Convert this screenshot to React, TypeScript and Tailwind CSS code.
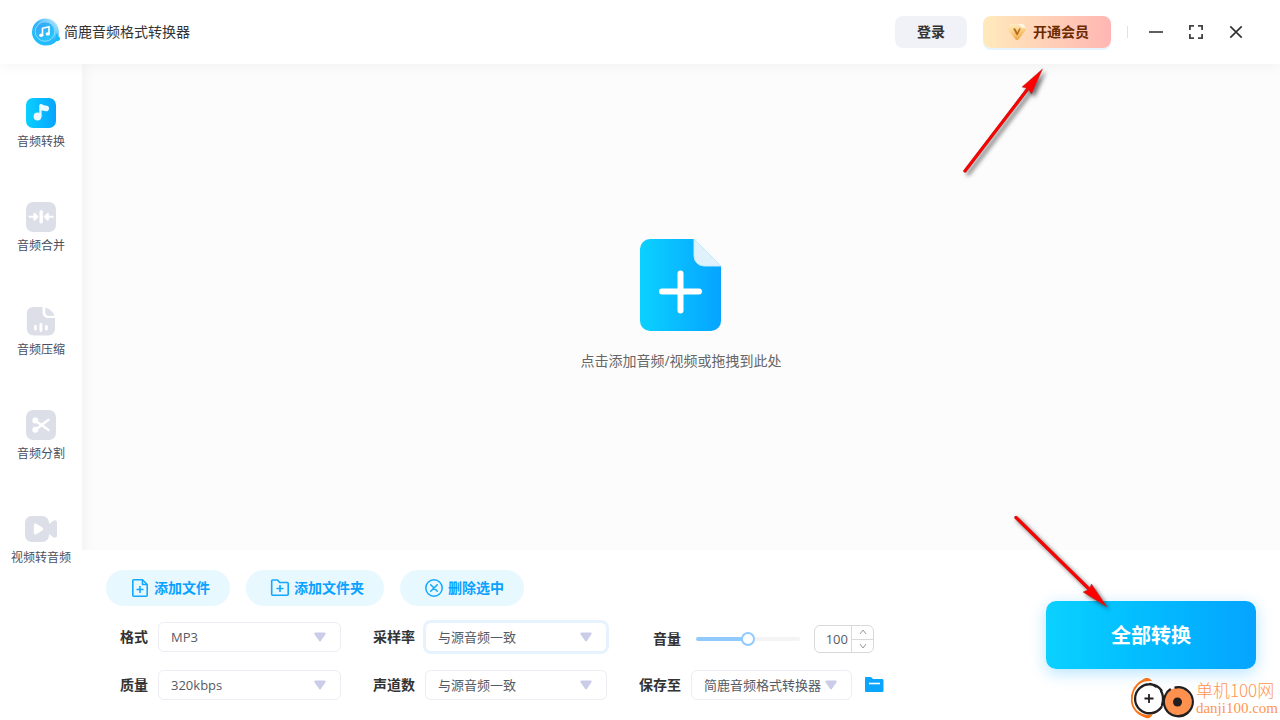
import { useState } from "react";
import type { ReactNode } from "react";
import clsx from "clsx";

const navItems = [
    { label: "音频转换", icon: <ConvertIcon /> },
    { label: "音频合并", icon: <MergeIcon /> },
    { label: "音频压缩", icon: <CompressIcon /> },
    { label: "音频分割", icon: <SplitIcon /> },
    { label: "视频转音频", icon: <VideoIcon /> },
];

/* ---------- icons ---------- */

function LogoIcon() {
    return (
        <svg width="30" height="30" viewBox="0 0 30 30" aria-hidden="true">
            <defs>
                <linearGradient id="logoRing" x1="0" y1="1" x2="1" y2="0">
                    <stop offset="0" stopColor="#12c4fb" />
                    <stop offset="0.5" stopColor="#2fb4fb" />
                    <stop offset="1" stopColor="#d9f3fe" />
                </linearGradient>
                <linearGradient id="logoCore" x1="0" y1="0" x2="1" y2="1">
                    <stop offset="0" stopColor="#3f9ffa" />
                    <stop offset="1" stopColor="#1fd0fb" />
                </linearGradient>
            </defs>
            <circle cx="14.5" cy="15" r="13.5" fill="url(#logoRing)" />
            <path d="M16 28.300c5-1 8.500-4.500 9-10.300.5-2 1.600-2 2-.3.4 1 .3 1.600 1.200 2.300 1.200.9 1.300 2.200.2 3.300-.9.900-2 1-3.200.900-2.200 2.600-5.200 4-9.200 4.100z" fill="#12bdf8" />
            <circle cx="14" cy="14.500" r="9.800" fill="url(#logoCore)" stroke="#8fdcfe" strokeWidth="1" />
            <path d="M11.500 18.500V11.300l6.500-1.500v7" fill="none" stroke="#fff" strokeWidth="1.600" />
            <ellipse cx="10.200" cy="18.300" rx="2.100" ry="1.700" fill="#fff" />
            <ellipse cx="16.800" cy="16.900" rx="2.100" ry="1.700" fill="#fff" />
        </svg>
    );
}

function GemIcon() {
    return (
        <svg width="20" height="20" viewBox="0 0 20 20" aria-hidden="true">
            <defs>
                <linearGradient id="gem" x1="0" y1="0" x2="0.3" y2="1">
                    <stop offset="0" stopColor="#fff0cf" />
                    <stop offset="0.5" stopColor="#fbd48c" />
                    <stop offset="1" stopColor="#f0a94c" />
                </linearGradient>
            </defs>
            <path d="M5 2h10c.8 0 1.400.3 1.900.9l2 3c.5.8.4 1.700-.2 2.400l-7.300 9.200c-.8 1-2 1-2.800 0L1.300 8.300c-.6-.7-.7-1.600-.2-2.400l2-3C3.600 2.300 4.200 2 5 2z" fill="url(#gem)" />
            <path d="M11 2h4c.8 0 1.400.3 1.900.9L19 6.500l-4-1z" fill="#fff7e6" />
            <path d="M6 6.500h2.300l1.900 3.700 2-3.700h1.600L10.700 13h-1.200z" fill="#b86d1e" />
        </svg>
    );
}

function ConvertIcon() {
    return (
        <svg width="32" height="32" viewBox="0 0 32 32" aria-hidden="true">
            <defs>
                <linearGradient id="convert" x1="0" y1="0" x2="1" y2="0">
                    <stop offset="0" stopColor="#0ad0ff" />
                    <stop offset="1" stopColor="#07a4ff" />
                </linearGradient>
            </defs>
            <rect x="1" y="1" width="30" height="30" rx="7" fill="url(#convert)" />
            <circle cx="12.500" cy="19.500" r="3.900" fill="#ecfaff" />
            <path d="M14.300 19.500V8.800c0-1.500 1.200-2.100 2.600-1.500 1.300.6 2.700 1.300 4.800 1.500 1.700.2 2.500 1.300 2.300 2.900-.2 1.900-1.500 2.800-3.400 2.500-1.800-.2-3-.6-4-1v6.500z" fill="#ecfaff" />
        </svg>
    );
}

function MergeIcon() {
    return (
        <svg width="32" height="32" viewBox="0 0 32 32" aria-hidden="true">
            <rect x="1" y="1" width="30" height="30" rx="7" fill="#dcdfe7" />
            <rect x="14.500" y="9" width="3.400" height="13.500" rx="1.700" fill="#fff" />
            <path d="M4.500 14.700h4v-2.200c0-.8.900-1.100 1.500-.6l3 3c.5.500.5 1.100 0 1.600l-3 3c-.6.500-1.500.2-1.500-.6v-2.200h-4c-1.300 0-1.300-2 0-2z" fill="#fff" />
            <path d="M27.800 14.700h-4v-2.200c0-.8-.9-1.100-1.500-.6l-3 3c-.5.500-.5 1.100 0 1.600l3 3c.6.500 1.500.2 1.500-.6v-2.200h4c1.300 0 1.300-2 0-2z" fill="#fff" />
        </svg>
    );
}

function CompressIcon() {
    return (
        <svg width="32" height="32" viewBox="0 0 32 32" aria-hidden="true">
            <path d="M9 2h8.500v5c0 4 2.500 6 6 6H30v10c0 4.500-2.500 7.500-7 7.500H9c-4.500 0-7.200-3-7.200-7.500V9C1.800 4.500 4.500 2 9 2z" fill="#dcdfe7" />
            <path d="M20.300 2.500c3.700 1 7.800 4.500 9.500 8.300h-6.300c-2 0-3.200-1.200-3.200-3.200z" fill="#dcdfe7" />
            <g fill="#fff">
                <rect x="9" y="20" width="2.800" height="5.500" rx="1.400" />
                <rect x="14.500" y="18" width="2.800" height="9" rx="1.400" />
                <rect x="20" y="20" width="2.800" height="5.500" rx="1.400" />
            </g>
        </svg>
    );
}

function SplitIcon() {
    return (
        <svg width="32" height="32" viewBox="0 0 32 32" aria-hidden="true">
            <rect x="1" y="1" width="30" height="30" rx="7" fill="#dcdfe7" />
            <circle cx="10.300" cy="11.500" r="3" fill="#fff" />
            <circle cx="10.300" cy="20.800" r="3" fill="#fff" />
            <path d="M11.500 12.500 23.500 21M11.500 20 23.500 10.800" stroke="#fff" strokeWidth="2.400" strokeLinecap="round" />
        </svg>
    );
}

function VideoIcon() {
    return (
        <svg width="32" height="32" viewBox="0 0 32 32" aria-hidden="true">
            <rect x="0" y="3" width="24" height="26" rx="6.500" fill="#dcdfe7" />
            <path d="M24 11l4-3c1.800-1.300 4-.5 4 1.500v13c0 2-2.200 2.800-4 1.500l-4-3z" fill="#dcdfe7" />
            <path d="M8.800 12.200c0-1.500 1.200-2.200 2.500-1.400l6 3.700c1.200.8 1.200 2.200 0 3l-6 3.700c-1.300.8-2.500.1-2.500-1.400z" fill="#fff" />
        </svg>
    );
}

function BigFileIcon() {
    return (
        <svg width="82" height="92" viewBox="0 0 82 92" aria-hidden="true">
            <defs>
                <linearGradient id="bigFile" x1="0" y1="0" x2="1" y2="0">
                    <stop offset="0" stopColor="#0bd1ff" />
                    <stop offset="1" stopColor="#06a4ff" />
                </linearGradient>
            </defs>
            <path d="M10 0h44l27 27v55a10 10 0 0 1-10 10H10A10 10 0 0 1 0 82V10A10 10 0 0 1 10 0z" fill="url(#bigFile)" />
            <path d="M54 0l27 27H64a10 10 0 0 1-10-10z" fill="#dff2fc" stroke="#c0e9fb" strokeWidth="1" />
            <path d="M40.500 34.500v37M22 52.500h37" stroke="#fff" strokeWidth="6" strokeLinecap="round" />
        </svg>
    );
}

function FilePlusIcon() {
    return (
        <svg width="20" height="20" viewBox="0 0 20 20" fill="none" stroke="#12a8ff" strokeWidth="1.600" strokeLinejoin="round" aria-hidden="true">
            <path d="M3.800 1.800h8.700l4.700 4.700v10.700a1 1 0 0 1-1 1H3.800a1 1 0 0 1-1-1V2.800a1 1 0 0 1 1-1z" />
            <path d="M12.500 2v4.500H17M10 8v7M6.500 11.500h7" />
        </svg>
    );
}

function FolderPlusIcon() {
    return (
        <svg width="20" height="20" viewBox="0 0 20 20" fill="none" stroke="#12a8ff" strokeWidth="1.600" strokeLinejoin="round" aria-hidden="true">
            <path d="M2.700 2h4.800l2.200 2.500h7.500a1 1 0 0 1 1 1v10.700a1 1 0 0 1-1 1H2.700a1 1 0 0 1-1-1V3a1 1 0 0 1 1-1z" />
            <path d="M10 7v7M6.500 10.500h7" />
        </svg>
    );
}

function CircleXIcon() {
    return (
        <svg width="20" height="20" viewBox="0 0 20 20" fill="none" stroke="#12a8ff" strokeWidth="1.500" strokeLinecap="round" aria-hidden="true">
            <circle cx="10" cy="10" r="8.200" />
            <path d="M6.700 6.700l6.600 6.600M13.300 6.700l-6.600 6.600" />
        </svg>
    );
}

function Chevron({ up }: { up?: boolean }) {
    return (
        <svg width="8" height="6" viewBox="0 0 8 6" fill="none" stroke="#999" aria-hidden="true">
            <path d={up ? "M1 5l3-4 3 4" : "M1 1l3 4 3-4"} />
        </svg>
    );
}

/* ---------- controls ---------- */

function PillButton({ icon, children }: { icon: ReactNode; children: ReactNode }) {
    return (
        <button className="flex h-9 items-center gap-1 rounded-full bg-[#e8f8ff] pr-5 pl-6 text-sm font-bold text-[#0aa1ff] hover:bg-[#d9f3ff]">
            {icon}
            {children}
        </button>
    );
}

type SelectFieldProps = {
    id: string;
    label: string;
    options: string[];
    width: string;
    focused?: boolean;
};

function SelectField({ id, label, options, width, focused }: SelectFieldProps) {
    return (
        <div className="flex items-center justify-end gap-[10px]">
            <label htmlFor={id} className="text-sm font-bold text-[#333]">
                {label}
            </label>
            <div className={clsx("relative", width)}>
                <select
                    id={id}
                    className={clsx(
                        "block h-[30px] w-full appearance-none rounded-md border bg-white pt-px pr-6 pl-3 text-[13px] text-[#555b66] outline-none",
                        focused ? "border-[#e6f3fe] ring-2 ring-[#e6f3fe]" : "border-[#ededf3]"
                    )}
                >
                    {options.map((option) => (
                        <option key={option}>{option}</option>
                    ))}
                </select>
                <svg className="pointer-events-none absolute top-[10px] right-[15px]" width="12" height="10" viewBox="0 0 12 10" aria-hidden="true">
                    <path d="M1.500.5h9c1 0 1.500 1 1 1.800L7 8.800c-.5.800-1.500.8-2 0L.5 2.300C0 1.500.5.5 1.500.5z" fill="#cacce8" />
                </svg>
            </div>
        </div>
    );
}

function VolumeField() {
    const [volume, setVolume] = useState(100);
    const fill = volume / 2;

    return (
        <div className="flex items-center pt-1">
            <label htmlFor="volume" className="w-[42px] text-right text-sm font-bold text-[#333]">
                音量
            </label>
            <input
                id="volume"
                type="range"
                min={0}
                max={200}
                value={volume}
                onChange={(e) => setVolume(Number(e.target.value))}
                className="ml-[15px] h-1 w-[104px] appearance-none rounded-full outline-none [&::-webkit-slider-thumb]:size-[14px] [&::-webkit-slider-thumb]:appearance-none [&::-webkit-slider-thumb]:rounded-full [&::-webkit-slider-thumb]:border-2 [&::-webkit-slider-thumb]:border-[#91caff] [&::-webkit-slider-thumb]:bg-white"
                style={{ background: `linear-gradient(to right, #91caff ${fill}%, #f4f4f4 ${fill}%)` }}
            />
            <div className="ml-[14px] flex h-7 w-[60px] overflow-hidden rounded-md border border-[#d9d9d9] bg-white">
                <input
                    aria-label="音量数值"
                    value={volume}
                    onChange={(e) => setVolume(Number(e.target.value) || 0)}
                    className="w-0 flex-1 pt-[2px] pr-[3px] text-right text-[13px] text-[#555b66] outline-none"
                />
                <div className="flex w-[22px] flex-col border-l border-[#d9d9d9]">
                    <button aria-label="增大" onClick={() => setVolume(Math.min(200, volume + 1))} className="flex flex-1 items-center justify-center border-b border-[#d9d9d9]">
                        <Chevron up />
                    </button>
                    <button aria-label="减小" onClick={() => setVolume(Math.max(0, volume - 1))} className="flex flex-1 items-center justify-center">
                        <Chevron />
                    </button>
                </div>
            </div>
        </div>
    );
}

/* ---------- overlays ---------- */

function Annotations() {
    return (
        <>
            <svg className="pointer-events-none absolute top-[60px] right-[220px] z-30 drop-shadow-[3px_3px_2px_rgba(0,0,0,0.55)]" width="100" height="120" viewBox="960 60 100 120" aria-hidden="true">
                <path d="M965 171L1030 86" stroke="#a33" strokeWidth="3.400" strokeLinecap="round" />
                <path d="M965 171L1030 86" stroke="#f00" strokeWidth="2.600" strokeLinecap="round" />
                <path d="M1042.500 69L1022 87l6 1.500 3.500 5.500z" fill="#f00" stroke="#a33" strokeWidth="0.500" />
            </svg>
            <svg className="pointer-events-none absolute right-[160px] bottom-[100px] z-30 drop-shadow-[2px_2px_2px_rgba(0,0,0,0.55)]" width="110" height="110" viewBox="1010 510 110 110" aria-hidden="true">
                <path d="M1016 517.500L1090 590" stroke="#a33" strokeWidth="3.400" strokeLinecap="round" />
                <path d="M1016 517.500L1090 590" stroke="#f00" strokeWidth="2.600" strokeLinecap="round" />
                <path d="M1107 607L1083 592l6-2.500 2.500-5.500z" fill="#f00" stroke="#a33" strokeWidth="0.500" />
            </svg>
        </>
    );
}

function Watermark() {
    return (
        <div className="pointer-events-none absolute right-0 bottom-0 z-30 flex items-center gap-[2px] pr-[2px] text-[#ff9651]">
            <svg width="64" height="44" viewBox="0 0 64 44" fill="none" aria-hidden="true">
                <path d="M12 5C-3 14-2 37 17 41" stroke="#f97316" strokeWidth="1.800" />
                <path d="M8 8.500C12 4.500 13 2 17 2c3 0 4 2 5 3-5-.5-9 .5-14 3.500zM8 35c5 4 9 4.500 15 3-2 3-3 5-7 4-3-1-6-4-8-7z" fill="#f97316" />
                <circle cx="19" cy="22.500" r="14.200" fill="#fff" />
                <path d="M31.500 14.500A14.500 14.500 0 1 0 31.500 31M26 10.500a14 14 0 0 0-6-2.500" stroke="#231f20" strokeWidth="2.300" strokeLinecap="round" />
                <path d="M31 15c2 3 2.500 9 1 14" stroke="#231f20" strokeWidth="2.300" strokeLinecap="round" />
                <path d="M19 18v9M14.500 22.500h9" stroke="#231f20" strokeWidth="1.800" />
                <circle cx="47.500" cy="26" r="14" fill="#fd914d" />
                <path d="M45.500 11.500A14.500 14.500 0 1 1 35 20c1-3 2.500-5 5-6.500" stroke="#231f20" strokeWidth="2.300" strokeLinecap="round" />
                <circle cx="47.500" cy="26" r="4.500" fill="#231f20" />
            </svg>
            <div className="flex flex-col">
                <span className="font-['Noto_Sans_CJK_SC',sans-serif] text-[17px] leading-5 font-light">单机100网</span>
                <span className="font-['Liberation_Serif',serif] text-[15px] leading-4">danji100.com</span>
            </div>
        </div>
    );
}

export default function App() {
    const [active, setActive] = useState(0);

    return (
        <div className="relative flex h-screen min-h-[640px] flex-col overflow-hidden bg-white font-['Open_Sans','Noto_Sans_CJK_SC',sans-serif] text-[#333]">
            {/* Title bar */}
            <header className="relative z-20 flex h-16 shrink-0 items-center justify-between bg-white pr-9 pl-[31px] shadow-[0_0_16px_rgba(0,0,0,0.06)]">
                <div className="flex items-center gap-[3px]">
                    <LogoIcon />
                    <h1 className="text-sm">简鹿音频格式转换器</h1>
                </div>
                <div className="flex items-center">
                    <button className="h-8 w-[72px] rounded-lg bg-[#f1f2f8] text-sm font-bold">登录</button>
                    <button className="ml-4 flex h-8 w-32 items-center justify-center gap-[6px] rounded-lg bg-linear-to-r from-[#ffeabc] to-[#ffb6b3] pl-[2px] text-sm font-bold text-[#6b2a00] shadow-[0_2px_0_#e6f4ff]">
                        <GemIcon />
                        开通会员
                    </button>
                    <div className="ml-4 h-3 w-px bg-[#dfe1e6]" />
                    <div className="ml-5 flex items-center gap-6">
                        <button aria-label="最小化">
                            <svg width="16" height="16" viewBox="0 0 16 16" fill="none" stroke="#444" strokeWidth="1.700">
                                <path d="M1 8h14" />
                            </svg>
                        </button>
                        <button aria-label="最大化">
                            <svg width="16" height="16" viewBox="0 0 16 16" fill="none" stroke="#444" strokeWidth="1.800">
                                <path d="M1.900 6V1.900H6M10 1.900h4.100V6M14.100 10v4.100H10M6 14.100H1.900V10" />
                            </svg>
                        </button>
                        <button aria-label="关闭">
                            <svg width="16" height="16" viewBox="0 0 16 16" fill="none" stroke="#333" strokeWidth="1.700">
                                <path d="M2.300 2.300l11.400 11.400M13.700 2.300L2.300 13.700" />
                            </svg>
                        </button>
                    </div>
                </div>
            </header>

            <div className="flex min-h-0 flex-1">
                {/* Sidebar */}
                <nav className="relative z-10 flex w-[82px] shrink-0 flex-col gap-[51px] bg-white pt-[33px] shadow-[0_0_16px_rgba(0,0,0,0.06)]">
                    {navItems.map((item, i) => (
                        <button
                            key={item.label}
                            onClick={() => setActive(i)}
                            aria-current={active === i ? "page" : undefined}
                            className="flex flex-col items-center gap-[5px] text-xs text-[#4a5060]"
                        >
                            {item.icon}
                            {item.label}
                        </button>
                    ))}
                </nav>

                <main className="flex min-w-0 flex-1 flex-col">
                    {/* Drop area */}
                    <button className="flex flex-1 flex-col items-center justify-center gap-5 bg-[#fcfcfc] pb-1 text-sm text-[#666]">
                        <BigFileIcon />
                        点击添加音频/视频或拖拽到此处
                    </button>

                    {/* Settings */}
                    <section className="relative z-10 flex items-center justify-between bg-white py-5 pr-6 pl-6">
                        <div className="flex flex-col gap-4">
                            <div className="flex gap-4">
                                <PillButton icon={<FilePlusIcon />}>添加文件</PillButton>
                                <PillButton icon={<FolderPlusIcon />}>添加文件夹</PillButton>
                                <PillButton icon={<CircleXIcon />}>删除选中</PillButton>
                            </div>
                            <div className="grid auto-rows-[30px] grid-cols-[auto_auto_auto] items-center gap-x-8 gap-y-[18px] pl-[14px]">
                                <SelectField id="format" label="格式" options={["MP3", "WAV", "FLAC"]} width="w-[183px]" />
                                <SelectField id="rate" label="采样率" options={["与源音频一致", "44100Hz", "48000Hz"]} width="w-[182px]" focused />
                                <VolumeField />
                                <SelectField id="quality" label="质量" options={["320kbps", "256kbps", "128kbps"]} width="w-[183px]" />
                                <SelectField id="channel" label="声道数" options={["与源音频一致", "单声道", "立体声"]} width="w-[182px]" />
                                <div className="flex items-center gap-3">
                                    <SelectField id="target" label="保存至" options={["简鹿音频格式转换器", "源文件夹"]} width="w-[161px]" />
                                    <button aria-label="打开文件夹">
                                        <svg width="20" height="16" viewBox="0 0 20 16" aria-hidden="true">
                                            <path d="M1.500 0H7l2 2h9c1 0 1.500.5 1.500 1.500v10c0 1-.5 1.500-1.500 1.500H2.500C1.500 15 1 14.500 1 13.500V.8z" fill="#0aa5ff" />
                                            <path d="M5 6.500h11" stroke="#fff" strokeWidth="1.600" />
                                        </svg>
                                    </button>
                                </div>
                            </div>
                        </div>
                        <button className="h-[68px] w-[210px] rounded-[10px] bg-linear-to-r from-[#0bd1ff] to-[#06a4ff] pt-[2px] text-xl font-bold text-white shadow-[0_4px_16px_rgba(10,165,255,0.3)]">
                            全部转换
                        </button>
                    </section>
                </main>
            </div>

            <Annotations />
            <Watermark />
        </div>
    );
}
